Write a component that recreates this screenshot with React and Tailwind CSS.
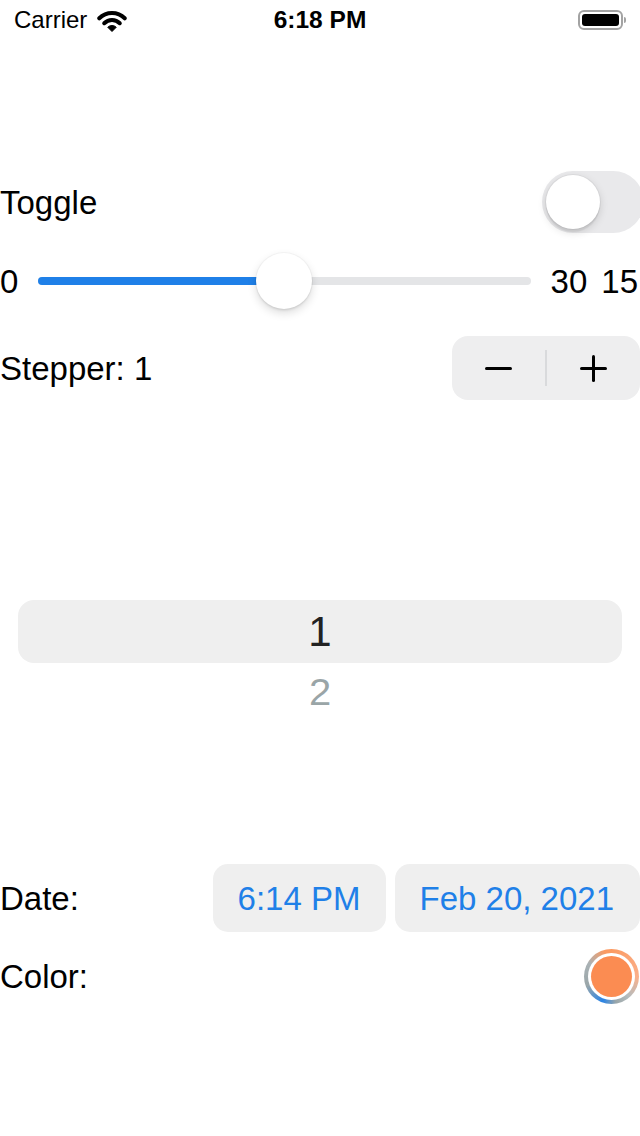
import React from "react";

function Wifi() {
  return (
    <svg width="30" height="23" viewBox="0 0 30 23" className="block">
      <path d="M2.27 9.27 A18 18 0 0 1 27.73 9.27" fill="none" stroke="#000" strokeWidth="4" strokeLinecap="round" />
      <path d="M7.22 14.22 A11 11 0 0 1 22.78 14.22" fill="none" stroke="#000" strokeWidth="4" strokeLinecap="round" />
      <path d="M15 22.5 L10.76 18.26 A6 6 0 0 1 19.24 18.26 Z" fill="#000" strokeLinejoin="round" stroke="#000" strokeWidth="1" />
    </svg>
  );
}

function Battery() {
  return (
    <div className="flex items-center">
      <div className="w-[45px] h-[20px] rounded-[6px] border-2 border-[#a3a3a3] p-[2px]">
        <div className="w-full h-full rounded-[3px] bg-black" />
      </div>
      <div className="w-[2px] h-[6px] rounded-r-[2px] bg-[#a3a3a3] ml-[1px]" />
    </div>
  );
}

export default function App() {
  return (
    <div className="w-[640px] h-[1136px] bg-white text-black overflow-hidden font-['Liberation_Sans',Arial,sans-serif]">
      {/* Status bar */}
      <div className="relative h-[40px] flex items-center px-[14px]">
        <div className="flex items-center gap-[10px]">
          <span className="text-[24px] leading-none">Carrier</span>
          <Wifi />
        </div>
        <div className="absolute left-0 right-0 top-0 h-[40px] flex items-center justify-center pointer-events-none">
          <span className="text-[24.5px] font-bold leading-none">6:18 PM</span>
        </div>
        <div className="ml-auto mr-[0px] mt-[-1px]">
          <Battery />
        </div>
      </div>

      <div className="flex flex-col text-[33px] leading-none">
        {/* Toggle row */}
        <div className="mt-[131px] h-[62px] flex items-center">
          <span>Toggle</span>
          <div className="ml-auto mr-[-4px] w-[102px] h-[62px] rounded-full bg-[#e9e9eb] p-[4px] shrink-0">
            <div className="w-[54px] h-[54px] rounded-full bg-white shadow-[0_3px_8px_rgba(0,0,0,0.15),0_3px_1px_rgba(0,0,0,0.06),0_0_0_1px_rgba(0,0,0,0.04)]" />
          </div>
        </div>

        {/* Slider row */}
        <div className="mt-[20px] h-[56px] flex items-center">
          <span className="w-[19px]">0</span>
          <div className="relative flex-1 ml-[19px] mr-[20px] h-[56px] flex items-center">
            <div className="w-full h-[8px] rounded-full bg-[#e4e5e7] overflow-hidden">
              <div className="w-1/2 h-full bg-[#1f80e8]" />
            </div>
            <div className="absolute top-0 left-[calc(50%-28px)] w-[56px] h-[56px] rounded-full bg-white shadow-[0_4px_10px_rgba(0,0,0,0.14),0_2px_2px_rgba(0,0,0,0.06),0_0_0_1px_rgba(0,0,0,0.03)]" />
          </div>
          <span>30</span>
          <span className="ml-[14px] mr-[2px]">15</span>
        </div>

        {/* Stepper row */}
        <div className="mt-[27px] h-[64px] flex items-center">
          <span>Stepper: 1</span>
          <div className="ml-auto w-[188px] h-[64px] rounded-[16px] bg-[#eeeeef] flex items-center shrink-0">
            <div className="flex-1 h-full flex items-center justify-center">
              <div className="w-[27px] h-[3px] bg-black rounded-full" />
            </div>
            <div className="w-[2px] h-[36px] bg-[#d9dadc]" />
            <div className="flex-1 h-full flex items-center justify-center">
              <div className="relative w-[27px] h-[27px]">
                <div className="absolute left-0 top-[12px] w-[27px] h-[3px] bg-black rounded-full" />
                <div className="absolute top-0 left-[12px] w-[3px] h-[27px] bg-black rounded-full" />
              </div>
            </div>
          </div>
        </div>

        {/* Picker */}
        <div className="mt-[200px] flex flex-col items-center">
          <div className="w-[604px] h-[63px] rounded-[16px] bg-[#efefef] flex items-center justify-center">
            <span className="text-[42px] text-[#222]">1</span>
          </div>
          <div className="h-[58px] flex items-center justify-center">
            <span className="text-[40px] text-[#9aa5a7] scale-y-[0.93]">2</span>
          </div>
        </div>

        {/* Date row */}
        <div className="mt-[143px] h-[68px] flex items-center">
          <span>Date:</span>
          <div className="ml-auto flex items-center gap-[9px]">
            <div className="h-[68px] px-[25px] rounded-[15px] bg-[#efefef] flex items-center text-[#1f80e8]">
              6:14 PM
            </div>
            <div className="h-[68px] pl-[25px] pr-[26px] rounded-[15px] bg-[#efefef] flex items-center text-[#1f80e8]">
              Feb 20, 2021
            </div>
          </div>
        </div>

        {/* Color row */}
        <div className="mt-[16px] h-[56px] flex items-center">
          <span>Color:</span>
          <div className="ml-auto mr-[1px] w-[55px] h-[55px] rounded-full p-[4px] bg-[conic-gradient(#fb9a62_0deg,#fbb08a_90deg,#b5bcbe_140deg,#9aa6a9_170deg,#2a84e6_200deg,#9aa6a9_250deg,#aab2b5_300deg,#fb9a62_345deg)]">
            <div className="w-full h-full rounded-full bg-white p-[3px]">
              <div className="w-full h-full rounded-full bg-[#fb8c52]" />
            </div>
          </div>
        </div>
      </div>
    </div>
  );
}
